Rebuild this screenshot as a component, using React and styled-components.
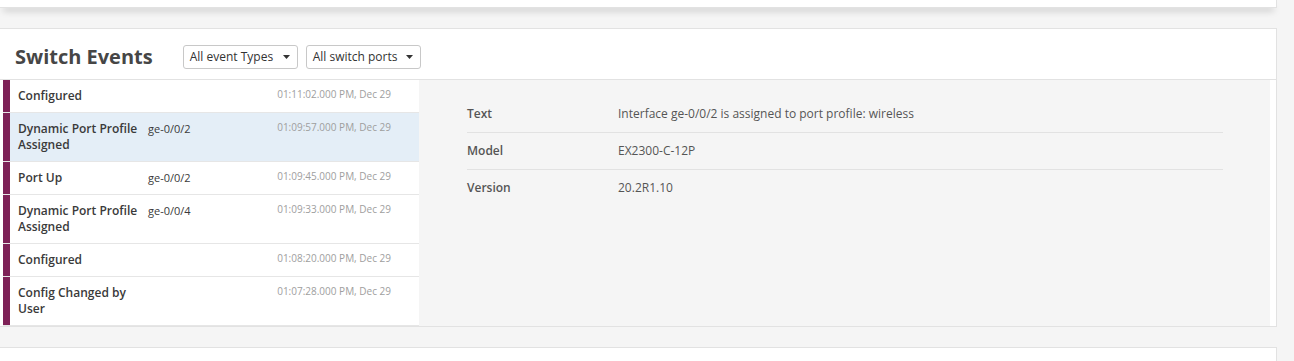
import React from "react";
import styled, { createGlobalStyle } from "styled-components";

const GlobalStyle = createGlobalStyle`
  html, body {
    margin: 0;
    padding: 0;
    background: #f5f5f5;
    font-family: "Open Sans", "Noto Sans", sans-serif;
    overflow: hidden;
  }
  * { box-sizing: border-box; }
`;

const Page = styled.div`
  padding-right: 17px;
  display: flex;
  flex-direction: column;
  gap: 20px;
`;

const TopCard = styled.div`
  height: 8px;
  background: #ffffff;
  border-right: 1px solid #e2e2e2;
  border-bottom: 1px solid #e2e2e2;
  box-shadow: 0 5px 7px -3px rgba(0, 0, 0, 0.4);
`;

const Card = styled.section`
  background: #ffffff;
  border: 1px solid #e2e2e2;
  border-left: none;
`;

const Header = styled.div`
  height: 51px;
  padding: 5px 15px 0;
  display: flex;
  align-items: center;
  border-bottom: 1px solid #e2e2e2;
`;

const Title = styled.h2`
  margin: 0 30px 0 0;
  font-size: 20px;
  line-height: 24px;
  font-weight: 700;
  color: #464646;
`;

const Filters = styled.div`
  display: flex;
  gap: 8px;
`;

const Select = styled.div`
  width: 115px;
  height: 24px;
  padding: 0 7px 0 6px;
  display: flex;
  align-items: center;
  justify-content: space-between;
  border: 1px solid #c8c8c8;
  border-radius: 3px;
  background: #ffffff;
  font-size: 12px;
  color: #333;
  white-space: nowrap;
`;

const Body = styled.div`
  display: flex;
  padding: 0 6px 0 3px;
`;

const List = styled.div`
  width: 416px;
  flex: none;
  background: #ffffff;
`;

const Row = styled.div`
  display: flex;
  align-items: stretch;
  border-bottom: 1px solid #e6e6e6;
  background: ${(p) => (p.$selected ? "#e4eef7" : "#ffffff")};
`;

const Bar = styled.div`
  width: 7px;
  flex: none;
  background: #7e2157;
`;

const RowContent = styled.div`
  flex: 1;
  display: flex;
  align-items: flex-start;
  padding: 8px 28px 8px 8px;
`;

const EventName = styled.div`
  width: 130px;
  flex: none;
  font-size: 12px;
  line-height: 16px;
  font-weight: 600;
  color: #3a3a3a;
`;

const Port = styled.div`
  flex: 1;
  font-size: 11px;
  line-height: 16px;
  color: #3a3a3a;
`;

const Time = styled.div`
  font-size: 10px;
  line-height: 13px;
  color: #9e9e9e;
  white-space: nowrap;
`;

const Detail = styled.div`
  flex: 1;
  background: #f5f5f5;
  padding: 16px 47px 0 48px;
`;

const DetailRow = styled.div`
  display: flex;
  padding: 10px 0;
  font-size: 12px;
  line-height: 16px;
  color: #555;
  border-bottom: ${(p) => (p.$last ? "none" : "1px solid #e2e2e2")};
`;

const Label = styled.div`
  width: 151px;
  flex: none;
  font-weight: 600;
`;

const Value = styled.div`
  flex: 1;
`;

const BottomCard = styled.div`
  height: 30px;
  background: #ffffff;
  border-top: 1px solid #e2e2e2;
  border-right: 1px solid #e2e2e2;
`;

const Caret = () => (
  <svg width="7" height="4" viewBox="0 0 7 4" aria-hidden="true">
    <polygon points="0,0 7,0 3.5,4" fill="#333" />
  </svg>
);

const events = [
  { name: "Configured", port: "", time: "01:11:02.000 PM, Dec 29" },
  { name: "Dynamic Port Profile Assigned", port: "ge-0/0/2", time: "01:09:57.000 PM, Dec 29", selected: true },
  { name: "Port Up", port: "ge-0/0/2", time: "01:09:45.000 PM, Dec 29" },
  { name: "Dynamic Port Profile Assigned", port: "ge-0/0/4", time: "01:09:33.000 PM, Dec 29" },
  { name: "Configured", port: "", time: "01:08:20.000 PM, Dec 29" },
  { name: "Config Changed by User", port: "", time: "01:07:28.000 PM, Dec 29" },
];

const details = [
  { label: "Text", value: "Interface ge-0/0/2 is assigned to port profile: wireless" },
  { label: "Model", value: "EX2300-C-12P" },
  { label: "Version", value: "20.2R1.10" },
];

export default function App() {
  return (
    <>
      <GlobalStyle />
      <Page>
        <TopCard />
        <Card>
          <Header>
            <Title>Switch Events</Title>
            <Filters>
              <Select>
                All event Types <Caret />
              </Select>
              <Select>
                All switch ports <Caret />
              </Select>
            </Filters>
          </Header>
          <Body>
            <List>
              {events.map((e, i) => (
                <Row key={i} $selected={e.selected}>
                  <Bar />
                  <RowContent>
                    <EventName>{e.name}</EventName>
                    <Port>{e.port}</Port>
                    <Time>{e.time}</Time>
                  </RowContent>
                </Row>
              ))}
            </List>
            <Detail>
              {details.map((d, i) => (
                <DetailRow key={d.label} $last={i === details.length - 1}>
                  <Label>{d.label}</Label>
                  <Value>{d.value}</Value>
                </DetailRow>
              ))}
            </Detail>
          </Body>
        </Card>
        <BottomCard />
      </Page>
    </>
  );
}
